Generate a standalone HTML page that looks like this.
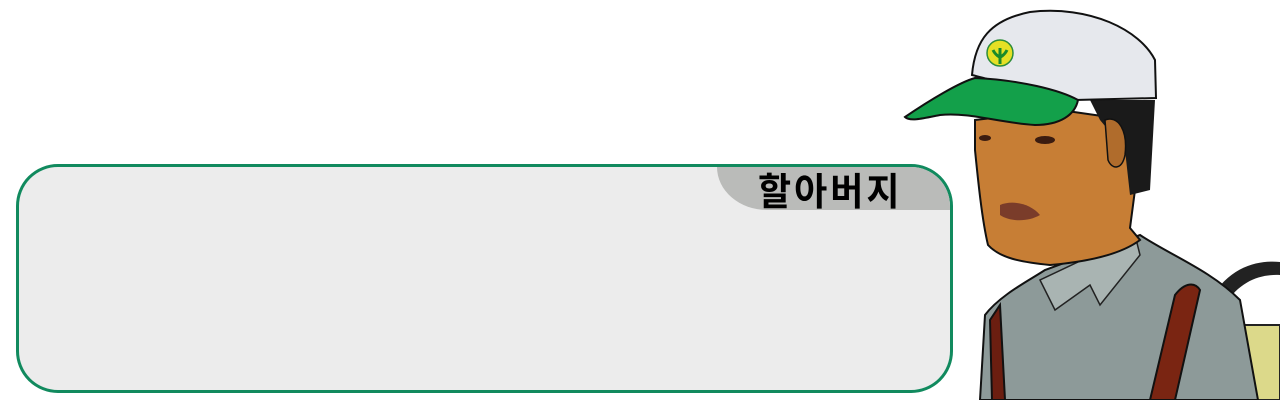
<!DOCTYPE html>
<html><head><meta charset="utf-8"><style>
body{margin:0;width:1280px;height:400px;background:#fff;position:relative;overflow:hidden;font-family:"Liberation Sans","Noto Sans CJK KR",sans-serif}
.box{position:absolute;left:16px;top:164px;width:931px;height:223px;border:3px solid #118a5e;border-radius:42px;background:#ececec;overflow:hidden}
.lab{position:absolute;right:0;top:0;width:233px;height:43px;background:#babbb9;border-bottom-left-radius:50px 43px}
.lab span{position:absolute;left:41px;top:0px;font-size:36px;font-weight:bold;color:#000;letter-spacing:3px;font-family:"Noto Sans CJK KR",sans-serif;transform:scaleY(1.05);transform-origin:top;line-height:42px}
svg{position:absolute;left:0;top:0}
</style></head><body>
<div class="box"><div class="lab"><span>할아버지</span></div></div>
<svg width="1280" height="400" viewBox="0 0 1280 400">
<path d="M1210 300 C1230 265 1260 260 1280 262 L1280 275 C1262 274 1240 280 1225 305 Z" fill="#222"/>
<rect x="1240" y="325" width="40" height="75" fill="#dcd98a" stroke="#222" stroke-width="2"/>
<path d="M980 400 L985 315 C1000 295 1030 280 1045 270 L1140 235 C1170 255 1210 270 1240 300 L1258 400 Z" fill="#8d9a99" stroke="#111" stroke-width="2"/>
<path d="M1040 280 L1055 310 L1090 285 L1100 305 L1140 255 L1135 235 Z" fill="#a9b4b2" stroke="#222" stroke-width="1.5"/>
<path d="M990 320 L1000 305 L1005 400 L992 400 Z" fill="#6b1e10" stroke="#111" stroke-width="2"/>
<path d="M1150 400 L1175 295 C1185 282 1195 282 1200 290 L1175 400 Z" fill="#7a2512" stroke="#111" stroke-width="2"/>
<path d="M975 120 L1060 110 L1130 120 L1135 190 L1130 228 L1140 240 C1120 255 1085 262 1050 265 C1020 262 1000 258 988 245 C982 220 978 180 975 150 Z" fill="#c77e35" stroke="#111" stroke-width="2"/>
<path d="M1090 100 L1155 100 L1150 190 L1130 195 L1125 150 L1100 120 Z" fill="#1a1a1a"/>
<path d="M1105 120 C1118 115 1128 130 1125 155 C1122 170 1112 170 1108 160 Z" fill="#b06c2c" stroke="#111" stroke-width="1.5"/>
<path d="M1000 205 C1012 200 1030 203 1040 215 C1028 222 1010 222 1000 215 Z" fill="#7a3c2a"/>
<ellipse cx="1045" cy="140" rx="10" ry="4" fill="#3b1c10"/>
<ellipse cx="985" cy="138" rx="6" ry="3" fill="#3b1c10"/>
<path d="M972 75 C975 40 990 20 1030 12 C1090 5 1140 30 1155 60 L1156 98 L1075 100 C1040 95 1000 82 972 75 Z" fill="#e6e8ed" stroke="#111" stroke-width="2"/>
<path d="M905 117 C930 100 960 82 975 78 C1020 80 1060 90 1078 100 C1075 115 1060 125 1035 125 C1000 123 970 112 940 115 C925 118 910 122 905 117 Z" fill="#13a04a" stroke="#111" stroke-width="2"/>
<circle cx="1000" cy="53" r="13" fill="#e5e025" stroke="#2d8d3a" stroke-width="1.5"/>
<path d="M1000 48 L1000 64 M993 50 C996 56 1000 57 1000 57 C1000 57 1004 56 1007 50" stroke="#1a8a2a" stroke-width="3" fill="none"/>
</svg>
</body></html>
